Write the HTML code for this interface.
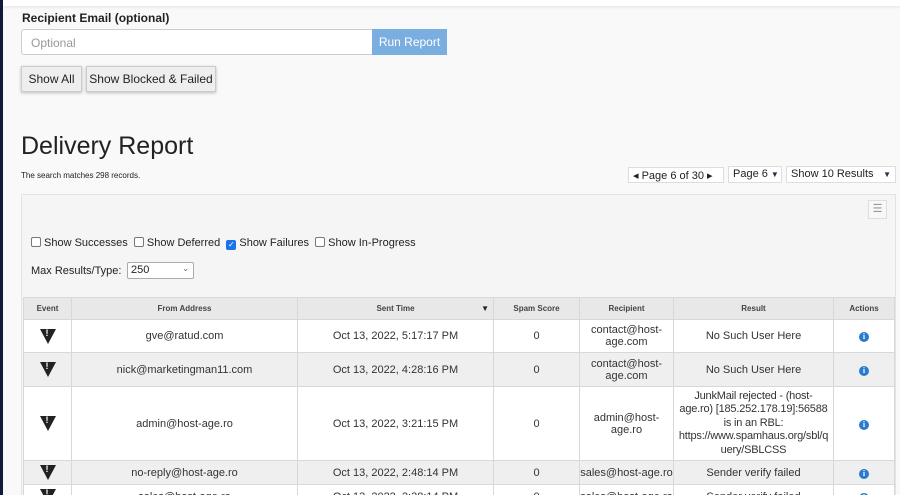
<!DOCTYPE html><html><head><style>
*{box-sizing:border-box;margin:0;padding:0}
html,body{width:900px;height:495px;overflow:hidden}
body{background:#f9f9f9;font-family:"Liberation Sans",sans-serif;color:#222;position:relative}
.a{position:absolute;white-space:nowrap}
.btn{background:#eee;border:1px solid #ccc;box-shadow:0 1px 3px rgba(0,0,0,.25);font-size:12px;display:flex;align-items:center;justify-content:center}
table{border-collapse:collapse;table-layout:fixed;font-size:11px;color:#333;white-space:normal}
td,th{border:1px solid #d8d8d8;text-align:center;vertical-align:middle;padding:0 2px}
th{background:#e8e8e8;font-size:8px;font-weight:bold;color:#444;height:22px}
tr.w td{background:#fff}tr.g td{background:#efefef}
.ev{width:0;height:0;border-left:8px solid transparent;border-right:8px solid transparent;border-top:15px solid #222;margin:auto;position:relative}
.ev:after{content:"!";position:absolute;left:-2px;top:-16px;color:#fff;font-size:9px;font-weight:bold}
.i{display:inline-block;width:10px;height:10px;border-radius:50%;background:#2a7bd0;color:#fff;font-size:8px;font-weight:bold;line-height:10px;font-family:"Liberation Serif",serif}
.cb{display:inline-block;width:10px;height:10px;border:1px solid #777;border-radius:2px;background:#fff;vertical-align:-1px;margin-right:3px}
</style></head><body>
<div class="a" style="left:0;top:0;width:3px;height:495px;background:#0f1b3a"></div>
<div class="a" style="left:3px;top:0;width:897px;height:6px;background:#fff;box-shadow:0 1px 3px rgba(0,0,0,.1)"></div>
<div class="a" style="left:22px;top:11px;font-size:12px;font-weight:bold;color:#222">Recipient Email (optional)</div>
<div class="a" style="left:21px;top:29px;width:352px;height:26px;background:#fff;border:1px solid #ccc;border-radius:3px 0 0 3px;font-size:12px;color:#999;padding:6px 9px">Optional</div>
<div class="a" style="left:372px;top:29px;width:75px;height:26px;background:#7aaee0;color:#fff;font-size:12px;display:flex;align-items:center;justify-content:center">Run Report</div>
<div class="a btn" style="left:21px;top:66px;width:61px;height:26px">Show All</div>
<div class="a btn" style="left:86px;top:66px;width:130px;height:26px">Show Blocked &amp; Failed</div>
<div class="a" style="left:21px;top:132px;font-size:25px;color:#222">Delivery Report</div>
<div class="a" style="left:21px;top:171px;font-size:8px;color:#222">The search matches 298 records.</div>
<div class="a" style="left:628px;top:167px;width:96px;height:16px;background:#fff;border:1px solid #ddd;font-size:11px;padding:1px 4px">◂ Page 6 of 30 ▸</div>
<div class="a" style="left:728px;top:166px;width:54px;height:17px;background:#fff;border:1px solid #ddd;font-size:11px;padding:1px 4px">Page 6 <span style="font-size:8px;color:#234">▼</span></div>
<div class="a" style="left:786px;top:166px;width:110px;height:17px;background:#fff;border:1px solid #ddd;font-size:11px;padding:1px 4px">Show 10 Results <span style="font-size:8px;color:#234;position:absolute;right:4px;top:3px">▼</span></div>
<div class="a" style="left:21px;top:194px;width:875px;height:310px;background:#f5f5f5;border:1px solid #e3e3e3"></div>
<div class="a" style="left:868px;top:200px;width:19px;height:19px;border:1px solid #ddd;background:#f8f8f8;font-size:11px;color:#999;text-align:center;line-height:17px">☰</div>
<div class="a" style="left:31px;top:237px;font-size:11px;color:#222"><span class="cb"></span>Show Successes &nbsp;<span class="cb"></span>Show Deferred &nbsp;<span class="cb" style="background:#1a73e8;border-color:#1a73e8;color:#fff;font-size:8px;line-height:8px;text-align:center">✓</span>Show Failures &nbsp;<span class="cb"></span>Show In-Progress</div>
<div class="a" style="left:31px;top:265px;font-size:11px;color:#222">Max Results/Type:</div>
<div class="a" style="left:127px;top:262px;width:67px;height:17px;background:#fff;border:1px solid #aaa;border-radius:2px;font-size:11px;padding:1px 3px">250<span style="position:absolute;right:4px;font-size:8px;color:#666">⌄</span></div>
<table class="a" style="left:23px;top:297px;width:871px;white-space:normal">
<colgroup><col style="width:48px"><col style="width:226px"><col style="width:196px"><col style="width:86px"><col style="width:94px"><col style="width:160px"><col style="width:61px"></colgroup>
<tr><th>Event</th><th>From Address</th><th style="position:relative">Sent Time<span style="position:absolute;right:4px;font-size:8px;color:#222">▼</span></th><th>Spam Score</th><th>Recipient</th><th>Result</th><th>Actions</th></tr>
<tr class="w" style="height:33px"><td><div class="ev"></div></td><td>gve@ratud.com</td><td>Oct 13, 2022, 5:17:17 PM</td><td>0</td><td>contact@host-<br>age.com</td><td>No Such User Here</td><td><span class="i">i</span></td></tr>
<tr class="g" style="height:34px"><td><div class="ev"></div></td><td>nick@marketingman11.com</td><td>Oct 13, 2022, 4:28:16 PM</td><td>0</td><td>contact@host-<br>age.com</td><td>No Such User Here</td><td><span class="i">i</span></td></tr>
<tr class="w" style="height:74px"><td><div class="ev"></div></td><td>admin@host-age.ro</td><td>Oct 13, 2022, 3:21:15 PM</td><td>0</td><td>admin@host-<br>age.ro</td><td style="line-height:13.5px;white-space:nowrap;padding:0;letter-spacing:-0.2px;overflow:hidden">JunkMail rejected - (host-<br>age.ro) [185.252.178.19]:56588<br>is in an RBL:<br>https://www.spamhaus.org/sbl/q<br>uery/SBLCSS</td><td><span class="i">i</span></td></tr>
<tr class="g" style="height:24px"><td><div class="ev"></div></td><td>no-reply@host-age.ro</td><td>Oct 13, 2022, 2:48:14 PM</td><td>0</td><td style="white-space:nowrap;padding:0">sales@host-age.ro</td><td>Sender verify failed</td><td><span class="i">i</span></td></tr>
<tr class="w" style="height:24px"><td><div class="ev"></div></td><td>sales@host-age.ro</td><td>Oct 13, 2022, 2:38:14 PM</td><td>0</td><td style="white-space:nowrap;padding:0">sales@host-age.ro</td><td>Sender verify failed</td><td><span class="i">i</span></td></tr>
</table>
</body></html>
